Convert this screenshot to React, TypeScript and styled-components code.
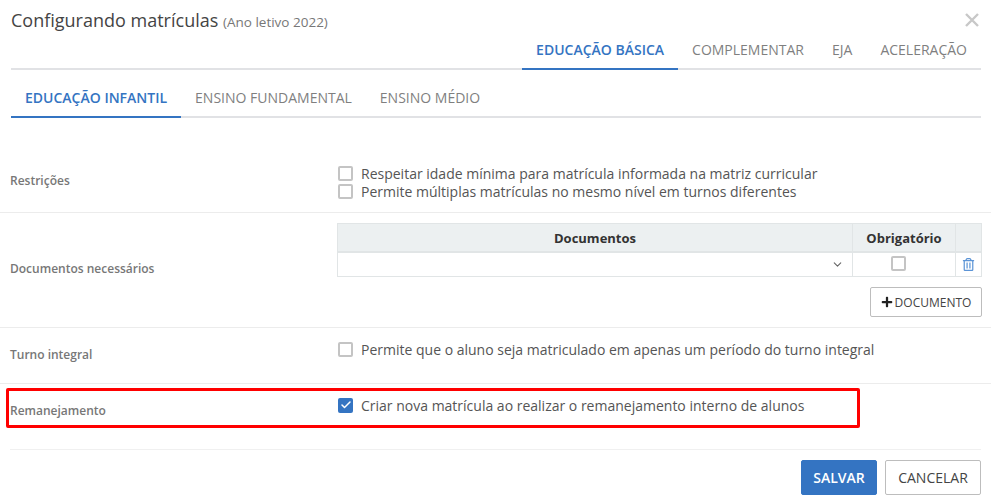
import React from "react";
import styled, { createGlobalStyle } from "styled-components";
import { FaPlus, FaRegTrashAlt } from "react-icons/fa";
import { ChevronDown, Check } from "lucide-react";

const GlobalStyle = createGlobalStyle`
  html, body {
    margin: 0;
    padding: 0;
    background: #fff;
    font-family: "Open Sans", sans-serif;
    color: #555;
  }
`;

const BLUE = "#3474c2";

const Modal = styled.div`
  position: relative;
  width: 991px;
  height: 504px;
  overflow: hidden;
  background: #fff;
`;

const Header = styled.div`
  display: flex;
  justify-content: space-between;
  padding: 8px 12px 0 11px;
  height: 30px;
  box-sizing: border-box;
`;

const Title = styled.div`
  font-size: 18px;
  line-height: 24px;
  color: #444;
  small {
    font-size: 13.5px;
    color: #777;
  }
`;

const Close = styled.svg`
  width: 14px;
  height: 14px;
  margin-top: 5px;
  stroke: #c8c8c8;
  stroke-width: 2.4;
  fill: none;
`;

const TabBar = styled.div<{ $right?: boolean }>`
  display: flex;
  justify-content: ${(p) => (p.$right ? "flex-end" : "flex-start")};
  margin: 0 10px 0 11px;
  padding-top: ${(p) => (p.$right ? 0 : 8)}px;
  border-bottom: 2px solid #e1e2e5;
  height: ${(p) => (p.$right ? 40 : 48)}px;
  box-sizing: border-box;
`;

const Tab = styled.div<{ $active?: boolean }>`
  height: 100%;
  box-sizing: content-box;
  padding: 0 14px;
  display: flex;
  align-items: center;
  font-size: 14px;
  font-weight: ${(p) => (p.$active ? 600 : 400)};
  color: ${(p) => (p.$active ? BLUE : "#7f7f7f")};
  border-bottom: 2px solid ${(p) => (p.$active ? BLUE : "transparent")};
`;

const Row = styled.div<{ $top: number; $bottom: number; $line?: boolean }>`
  display: flex;
  align-items: center;
  padding: ${(p) => p.$top}px 10px ${(p) => p.$bottom}px 10px;
  border-bottom: ${(p) => (p.$line === false ? "none" : "1px solid #ececec")};
`;

const Label = styled.div`
  width: 327px;
  flex: none;
  font-size: 12px;
  font-weight: 600;
  color: #777;
`;

const Content = styled.div<{ $padTop?: number; $padBottom?: number }>`
  flex: 1;
  min-width: 0;
  padding-top: ${(p) => p.$padTop ?? 0}px;
  padding-bottom: ${(p) => p.$padBottom ?? 0}px;
`;

const CheckLine = styled.div`
  display: flex;
  align-items: center;
  height: 18px;
  font-size: 14px;
  color: #555;
  gap: 8px;
  padding-left: 1px;
`;

const Box = styled.span<{ $checked?: boolean }>`
  width: 15px;
  height: 15px;
  flex: none;
  box-sizing: border-box;
  border-radius: 2px;
  border: ${(p) => (p.$checked ? "none" : "2px solid #c4c4c4")};
  background: ${(p) => (p.$checked ? BLUE : "#fff")};
  color: #fff;
  display: inline-flex;
  align-items: center;
  justify-content: center;
`;

const Table = styled.table`
  width: 645px;
  border-collapse: collapse;
  table-layout: fixed;
  font-size: 13px;
  th {
    height: 27px;
    padding: 0;
    background: #ecf0f1;
    color: #333;
    font-weight: 700;
    border: 1px solid #e1e5e6;
    border-bottom-width: 2px;
  }
  td {
    height: 23px;
    padding: 0;
    border: 1px solid #e1e5e6;
    text-align: center;
  }
`;

const SelectCell = styled.div`
  display: flex;
  justify-content: flex-end;
  padding-right: 8px;
  color: #666;
`;

const TableBox = styled(Box)`
  display: block;
  margin: 0 0 2px 38px;
`;

const TrashIcon = styled(FaRegTrashAlt)`
  color: #5b94d6;
  display: block;
  margin: 0 auto;
`;

const TableActions = styled.div`
  display: flex;
  justify-content: flex-end;
  margin-top: 10px;
  margin-right: -1px;
`;

const Button = styled.button<{ $primary?: boolean; $small?: boolean; $width: number }>`
  box-sizing: border-box;
  width: ${(p) => p.$width}px;
  font-family: "Open Sans", sans-serif;
  font-size: ${(p) => (p.$small ? 12 : 14)}px;
  height: ${(p) => (p.$small ? 30 : 35)}px;
  padding: 0;
  border-radius: 2px;
  border: 1px solid ${(p) => (p.$primary ? BLUE : "#bdbdbd")};
  background: ${(p) => (p.$primary ? BLUE : "#fff")};
  color: ${(p) => (p.$primary ? "#fff" : "#444")};
  font-weight: ${(p) => (p.$primary ? 600 : 400)};
  display: inline-flex;
  align-items: center;
  justify-content: center;
  gap: 2px;
`;

const Footer = styled.div`
  display: flex;
  justify-content: flex-end;
  gap: 8px;
  margin: 0 10px;
  padding-top: 10px;
  border-top: 1px solid #f0f0f0;
`;

const Highlight = styled.div`
  position: absolute;
  left: 6px;
  top: 388px;
  width: 854px;
  height: 40px;
  box-sizing: border-box;
  border: 3px solid #f00;
  border-radius: 2px;
  pointer-events: none;
`;

const App = () => {
  return (
    <Modal>
      <GlobalStyle />
      <Header>
        <Title>
          Configurando matrículas <small>(Ano letivo 2022)</small>
        </Title>
        <Close viewBox="0 0 14 14">
          <path d="M1 1L13 13M13 1L1 13" />
        </Close>
      </Header>
      <TabBar $right>
        <Tab $active>EDUCAÇÃO BÁSICA</Tab>
        <Tab>COMPLEMENTAR</Tab>
        <Tab>EJA</Tab>
        <Tab>ACELERAÇÃO</Tab>
      </TabBar>
      <TabBar>
        <Tab $active>EDUCAÇÃO INFANTIL</Tab>
        <Tab>ENSINO FUNDAMENTAL</Tab>
        <Tab>ENSINO MÉDIO</Tab>
      </TabBar>

      <Row $top={42} $bottom={12}>
        <Label>Restrições</Label>
        <Content $padTop={4}>
          <CheckLine>
            <Box />
            Respeitar idade mínima para matrícula informada na matriz curricular
          </CheckLine>
          <CheckLine>
            <Box />
            Permite múltiplas matrículas no mesmo nível em turnos diferentes
          </CheckLine>
        </Content>
      </Row>

      <Row $top={6} $bottom={10}>
        <Label>Documentos necessários</Label>
        <Content $padTop={4}>
          <Table>
            <colgroup>
              <col />
              <col width={103} />
              <col width={26} />
            </colgroup>
            <thead>
              <tr>
                <th>Documentos</th>
                <th>Obrigatório</th>
                <th />
              </tr>
            </thead>
            <tbody>
              <tr>
                <td>
                  <SelectCell>
                    <ChevronDown size={13} />
                  </SelectCell>
                </td>
                <td>
                  <TableBox />
                </td>
                <td>
                  <TrashIcon size={13} />
                </td>
              </tr>
            </tbody>
          </Table>
          <TableActions>
            <Button $small $width={112}>
              <FaPlus size={12} color="#222" />
              DOCUMENTO
            </Button>
          </TableActions>
        </Content>
      </Row>

      <Row $top={12} $bottom={15}>
        <Label>Turno integral</Label>
        <Content $padBottom={10}>
          <CheckLine>
            <Box />
            Permite que o aluno seja matriculado em apenas um período do turno integral
          </CheckLine>
        </Content>
      </Row>

      <Row $top={12} $bottom={25} $line={false}>
        <Label>Remanejamento</Label>
        <Content $padBottom={10}>
          <CheckLine>
            <Box $checked>
              <Check size={12} strokeWidth={3} />
            </Box>
            Criar nova matrícula ao realizar o remanejamento interno de alunos
          </CheckLine>
        </Content>
      </Row>

      <Footer>
        <Button $primary $width={76}>
          SALVAR
        </Button>
        <Button $width={96}>CANCELAR</Button>
      </Footer>
      <Highlight />
    </Modal>
  );
};

export default App;
